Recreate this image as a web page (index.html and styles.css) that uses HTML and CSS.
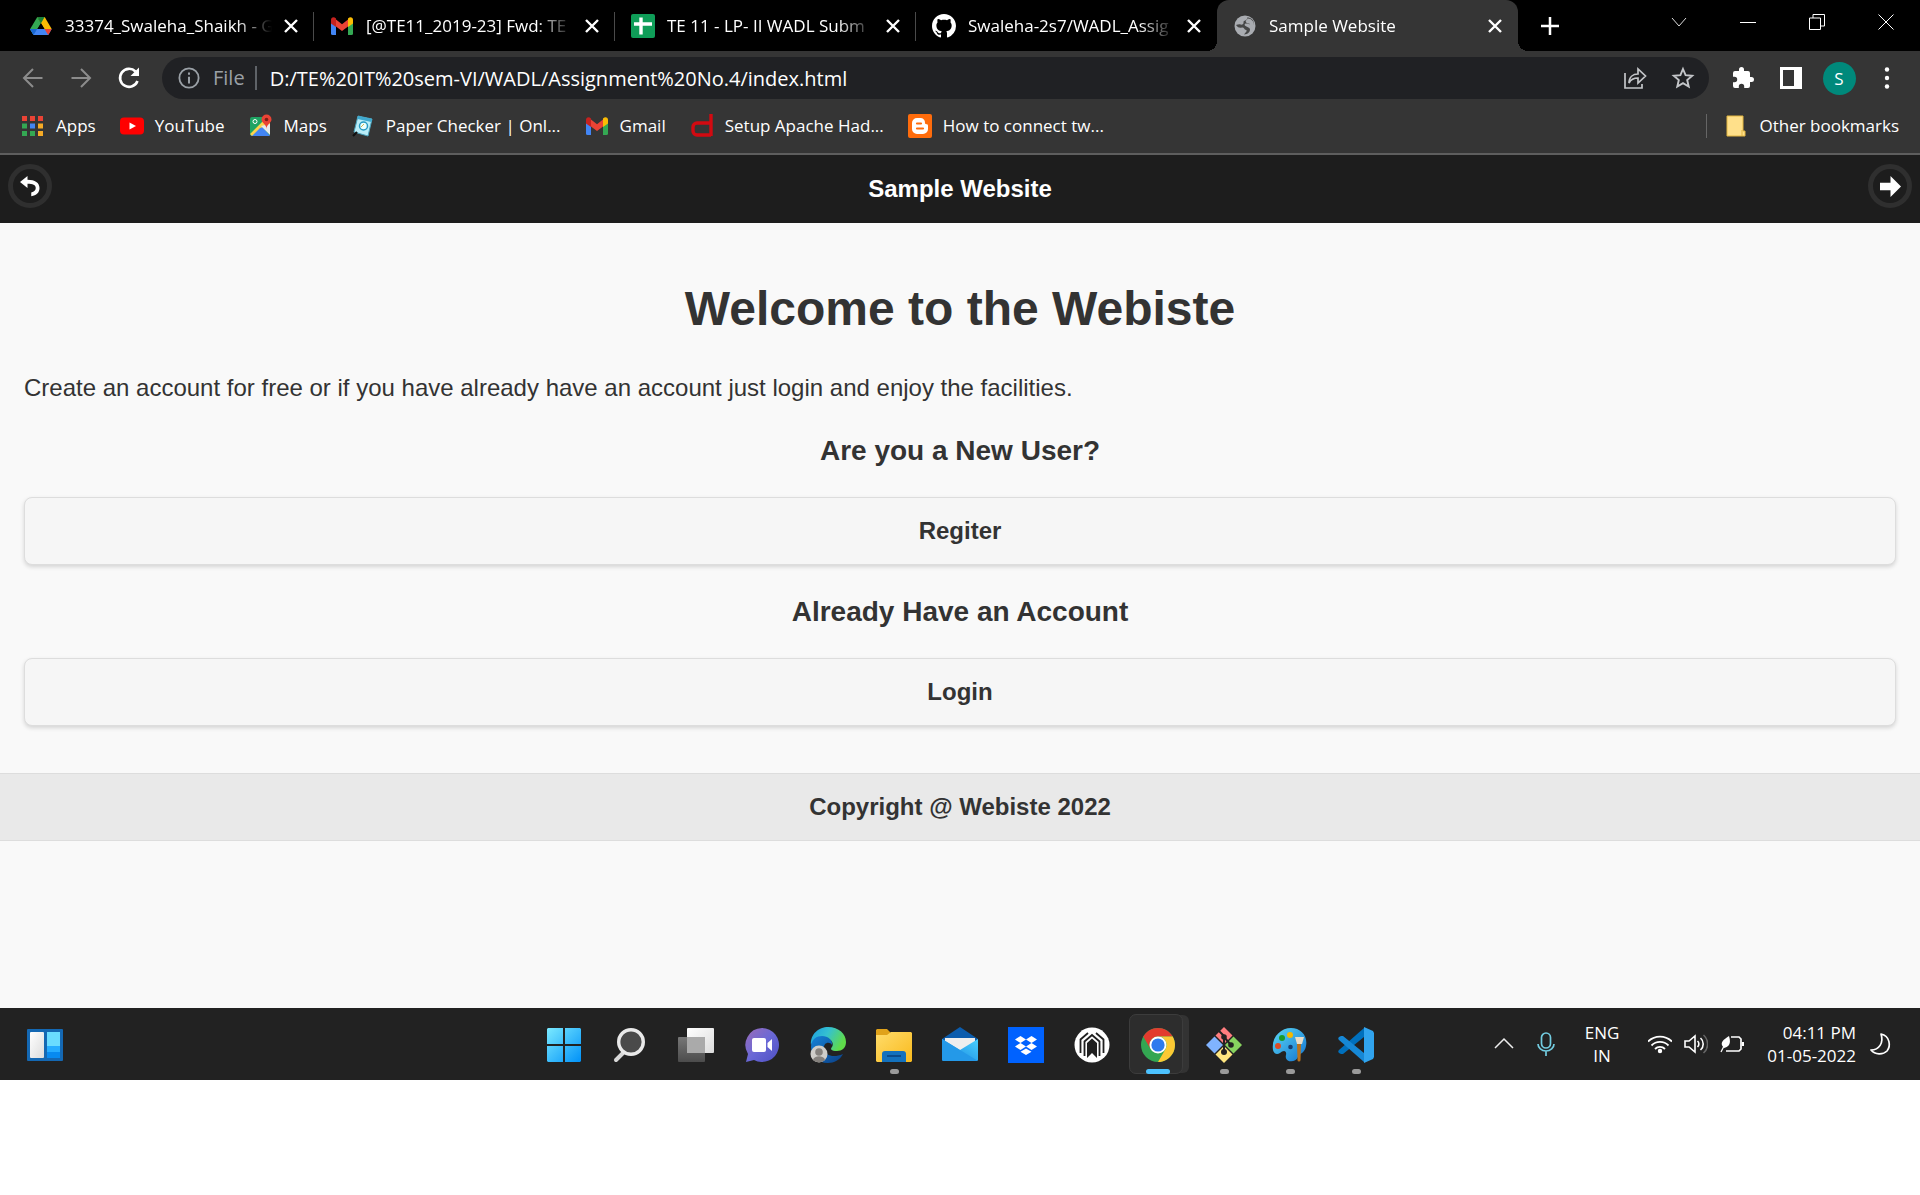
FILE: index.html
```html
<!DOCTYPE html>
<html lang="en">
<head>
<meta charset="utf-8">
<meta name="viewport" content="width=device-width, initial-scale=1">
<title>Sample Website</title>
<link rel="stylesheet" href="styles.css">
</head>
<body>
<svg class="defs" aria-hidden="true">
  <defs>
    <symbol id="close" viewBox="0 0 14 14"><path d="M1 1l12 12M13 1L1 13" stroke="#fff" stroke-width="2.400" fill="none"/></symbol>
    <symbol id="gmail" viewBox="0 0 24 24">
      <path d="M1 6v13.500a1.500 1.500 0 0 0 1.500 1.500H6V9.500z" fill="#4285f4"/>
      <path d="M23 6v13.500a1.500 1.500 0 0 1-1.500 1.500H18V9.500z" fill="#34a853"/>
      <path d="M6 5.500l6 4.800 6-4.800v7L12 17l-6-4.500z" fill="#ea4335"/>
      <path d="M1 6c0-3 3-3.500 5-1.500V13L1 9.500z" fill="#c5221f"/>
      <path d="M23 6c0-3-3-3.500-5-1.500V13l5-3.500z" fill="#fbbc04"/>
    </symbol>
    <linearGradient id="winBlue" x1="0" y1="0" x2="1" y2="1"><stop offset="0" stop-color="#7beaff"/><stop offset="1" stop-color="#0091f8"/></linearGradient>
    <linearGradient id="white" x1="0" y1="0" x2="1" y2="1"><stop offset="0" stop-color="#fff"/><stop offset="1" stop-color="#dcdcdc"/></linearGradient>
    <linearGradient id="grey" x1="0" y1="0" x2="0" y2="1"><stop offset="0" stop-color="#777"/><stop offset="1" stop-color="#4c4c4c"/></linearGradient>
    <linearGradient id="chat" x1="0" y1="0" x2="1" y2="1"><stop offset="0" stop-color="#9b6cb8"/><stop offset=".5" stop-color="#6a68d6"/><stop offset="1" stop-color="#4d4fc4"/></linearGradient>
    <linearGradient id="edgeTop" x1="0" y1="0" x2="1" y2=".4"><stop offset="0" stop-color="#1b9de2"/><stop offset=".5" stop-color="#35c1d0"/><stop offset="1" stop-color="#5fdc4a"/></linearGradient>
    <linearGradient id="edgeLow" x1="0" y1="0" x2="1" y2="1"><stop offset="0" stop-color="#1583d8"/><stop offset="1" stop-color="#0b3f86"/></linearGradient>
    <linearGradient id="folder" x1="0" y1="0" x2="1" y2="1"><stop offset="0" stop-color="#ffdc6b"/><stop offset="1" stop-color="#f9ba1d"/></linearGradient>
    <linearGradient id="mail" x1="0" y1="1" x2="1" y2="0"><stop offset="0" stop-color="#1683dc"/><stop offset="1" stop-color="#4ad0ff"/></linearGradient>
    <linearGradient id="paint" x1="0" y1="0" x2="1" y2="1"><stop offset="0" stop-color="#5bd8f6"/><stop offset="1" stop-color="#1273cf"/></linearGradient>
  </defs>
</svg>

<header class="browser">
  <div class="tabstrip">
    <nav class="tabs" aria-label="Tabs">
      <div class="tab">
        <svg class="icon" viewBox="0 0 24 24"><path d="M8.300 3h7.400l7 12h-7.400z" fill="#fbbc04"/><path d="M8.300 3L1 15.200 4.500 21 12 9.200z" fill="#34a853"/><path d="M8.300 3h7.400L12 9.200z" fill="#188038"/><path d="M1 15h21.700l-3.400 6H4.600z" fill="#4285f4"/><path d="M15.500 15h7.200l-3.500 6z" fill="#ea4335"/><path d="M1 15h7.200l-3.700 6z" fill="#1967d2"/><path d="M12 9.200L15.500 15h-7z" fill="#000"/></svg>
        <button class="tab-title">33374_Swaleha_Shaikh - G</button>
        <button class="tab-close" aria-label="Close tab"><svg viewBox="0 0 14 14"><use href="#close"/></svg></button>
      </div>
      <div class="tab">
        <svg class="icon" viewBox="0 0 24 24"><use href="#gmail"/></svg>
        <button class="tab-title">[@TE11_2019-23] Fwd: TE</button>
        <button class="tab-close" aria-label="Close tab"><svg viewBox="0 0 14 14"><use href="#close"/></svg></button>
      </div>
      <div class="tab">
        <svg class="icon" viewBox="0 0 24 24"><rect width="24" height="24" rx="2" fill="#0f9d58"/><path d="M3 10h18M10 3.500v17" stroke="#fff" stroke-width="3.400"/></svg>
        <button class="tab-title">TE 11 - LP- II WADL Subm</button>
        <button class="tab-close" aria-label="Close tab"><svg viewBox="0 0 14 14"><use href="#close"/></svg></button>
      </div>
      <div class="tab no-line">
        <svg class="icon" viewBox="0 0 16 16"><path fill="#fff" d="M8 0C3.580 0 0 3.580 0 8c0 3.540 2.290 6.530 5.470 7.590.4.070.55-.17.55-.38 0-.19-.01-.82-.01-1.490-2.010.37-2.530-.49-2.690-.94-.09-.23-.48-.94-.82-1.130-.28-.15-.68-.52-.01-.53.63-.01 1.080.58 1.230.82.72 1.210 1.870.87 2.330.66.070-.52.28-.87.51-1.070-1.780-.2-3.640-.89-3.640-3.950 0-.87.31-1.590.82-2.150-.08-.2-.36-1.020.08-2.120 0 0 .67-.21 2.200.82.64-.18 1.320-.27 2-.27s1.360.09 2 .27c1.530-1.040 2.200-.82 2.200-.82.44 1.100.16 1.920.08 2.120.51.56.82 1.270.82 2.150 0 3.070-1.870 3.750-3.650 3.950.29.25.54.73.54 1.480 0 1.070-.01 1.930-.01 2.200 0 .21.15.46.55.38A8.010 8.010 0 0 0 16 8c0-4.420-3.580-8-8-8z"/></svg>
        <button class="tab-title">Swaleha-2s7/WADL_Assig</button>
        <button class="tab-close" aria-label="Close tab"><svg viewBox="0 0 14 14"><use href="#close"/></svg></button>
      </div>
      <div class="tab active">
        <svg class="icon" viewBox="0 0 24 24"><circle cx="12" cy="12" r="10.500" fill="#a9acb1"/><path d="M14 3.500c1 1 0 2-1 2.500s-3 1-2.500 2.500S9 11 7.500 10.500s-3 .5-4.500.5c2 3 4 3 6 2.500s2 2 4 2.500-1 3-2 4.500c4 0 6-3 6-5s-3-2.500-4.500-3.500-1-2.500.5-2.500 3 1 4.500.5 2.500 0 3.500.5C21 6 18 3.500 14 3.500z" fill="#353535" opacity=".85"/><path d="M15 4.500c3 0 6 3 6 6-2 1-4-1-5.500-1S12 8 13 6.500z" fill="#a9acb1"/></svg>
        <button class="tab-title">Sample Website</button>
        <button class="tab-close" aria-label="Close tab"><svg viewBox="0 0 14 14"><use href="#close"/></svg></button>
      </div>
      <button class="new-tab" aria-label="New tab"><svg viewBox="0 0 18 18"><path d="M9 0v18M0 9h18" stroke="#fff" stroke-width="2.500"/></svg></button>
    </nav>
    <div class="window-controls">
      <button aria-label="Search tabs"><svg viewBox="0 0 16 16"><path d="M1 4l7 8 7-8" stroke="#ddd" fill="none"/></svg></button>
      <button aria-label="Minimize"><svg viewBox="0 0 16 16"><path d="M0 8.500h16" stroke="#fff"/></svg></button>
      <button aria-label="Restore"><svg viewBox="0 0 16 16"><path d="M.5 4h11v11.500H.5zM4 4V.5h11.500V12H12" stroke="#fff" fill="none"/></svg></button>
      <button aria-label="Close"><svg viewBox="0 0 16 16"><path d="M.5.5l15 15M15.500.5l-15 15" stroke="#fff"/></svg></button>
    </div>
  </div>

  <div class="toolbar">
    <button class="tool" aria-label="Back"><svg viewBox="0 0 24 24"><path d="M21.500 12H3M12 3l-9 9 9 9" stroke="#8c8c8c" stroke-width="2" fill="none"/></svg></button>
    <button class="tool" aria-label="Forward"><svg viewBox="0 0 24 24"><path d="M2.500 12H21M12 3l9 9-9 9" stroke="#8c8c8c" stroke-width="2" fill="none"/></svg></button>
    <button class="tool" aria-label="Reload"><svg viewBox="0 0 24 24"><path d="M20.500 15a9 9 0 1 1-2-9.500" stroke="#fff" stroke-width="2.600" fill="none"/><path d="M22 1.500V10h-8.500z" fill="#fff"/></svg></button>
    <div class="address">
      <svg class="info" viewBox="0 0 24 24"><circle cx="12" cy="12" r="10.500" stroke="#9aa0a6" stroke-width="2" fill="none"/><path d="M12 10.500V18M12 6v2.500" stroke="#9aa0a6" stroke-width="2.200"/></svg>
      <label for="url">File</label>
      <input id="url" type="text" value="D:/TE%20IT%20sem-VI/WADL/Assignment%20No.4/index.html">
      <button class="tool" aria-label="Share"><svg viewBox="0 0 24 24"><path d="M2 7v15h17v-4M6 17c0-6 4-9 9-9V3l7.500 7-7.500 7v-5c-4 0-7 1-9 5z" stroke="#c4c6c9" stroke-width="1.700" fill="none"/></svg></button>
      <button class="tool" aria-label="Bookmark"><svg viewBox="0 0 24 24"><path d="M12 3l2.600 6.100 6.600.6-5 4.300 1.500 6.500-5.700-3.400-5.700 3.400L7.800 14l-5-4.300 6.600-.6z" stroke="#c4c6c9" stroke-width="1.900" fill="none"/></svg></button>
    </div>
    <div class="actions">
      <button class="tool" aria-label="Extensions"><svg viewBox="0 0 24 24"><path fill="#fff" d="M20.500 11H19V7a2 2 0 0 0-2-2h-4V3.500a2.500 2.500 0 0 0-5 0V5H4a2 2 0 0 0-2 2v3.800h1.500a2.700 2.700 0 0 1 0 5.400H2V20a2 2 0 0 0 2 2h3.800v-1.500a2.700 2.700 0 0 1 5.400 0V22H17a2 2 0 0 0 2-2v-4h1.500a2.500 2.500 0 0 0 0-5z"/></svg></button>
      <button class="tool" aria-label="Side panel"><svg viewBox="0 0 24 24"><path fill="#fff" fill-rule="evenodd" d="M1 1h22v22H1zM4 4v16h11V4z"/></svg></button>
      <button class="tool" aria-label="Profile"><span class="avatar">S</span></button>
      <button class="tool" aria-label="Menu"><svg viewBox="0 0 24 24" fill="#fff"><circle cx="12" cy="3.500" r="2.200"/><circle cx="12" cy="12" r="2.200"/><circle cx="12" cy="20.500" r="2.200"/></svg></button>
    </div>
  </div>

  <nav class="bookmarks" aria-label="Bookmarks">
    <a href="#"><svg class="icon" viewBox="0 0 24 24"><path fill="#ea4335" d="M1 2h5v5H1zM9 2h5v5H9zM17 2h5v5h-5z"/><path fill="#34a853" d="M1 9.500h5v5H1zM1 17h5v5H1zM9 17h5v5H9z"/><path fill="#4285f4" d="M9 9.500h5v5H9z"/><path fill="#f5ab26" d="M17 9.500h5v5h-5zM17 17h5v5h-5z"/></svg>Apps</a>
    <a href="#"><svg class="icon" viewBox="0 0 24 24"><rect y="3.500" width="24" height="17" rx="4" fill="#f00"/><path d="M9.500 8.500v7l6.500-3.500z" fill="#fff"/></svg>YouTube</a>
    <a href="#"><svg class="icon" viewBox="0 0 24 24"><rect x="1" y="3" width="20" height="19" rx="2" fill="#1fa463"/><path d="M2 22L12 11l9 11z" fill="#4285f4"/><path d="M1 20L16 5l5 3v3L11 14l-8 8z" fill="#fbd44b"/><path d="M12 12l9 9V10z" fill="#e8eaed"/><circle cx="6" cy="7.500" r="2" stroke="#fff" fill="none"/><path d="M17.500 15c0-5-5-6-5-9.500a5 5 0 0 1 10 0c0 3.500-5 4.500-5 9.500z" fill="#ea4335"/><circle cx="17.500" cy="5.500" r="1.800" fill="#7b1e16"/></svg>Maps</a>
    <a href="#"><svg class="icon" viewBox="0 0 24 24"><path d="M7 2l14 3-4 17-14-4z" fill="#b9edf8" stroke="#4aa3bd"/><path d="M7 2l14 3-.7 3L6.500 5z" fill="#3fa9cf"/><circle cx="12.500" cy="12" r="4" fill="#eaffff" stroke="#269ac2" stroke-width="1.500"/><path d="M6 18l-4 4" stroke="#111" stroke-width="2.200"/><path d="M10 13l3-3" stroke="#d2b54b"/></svg>Paper Checker | Onl...</a>
    <a href="#"><svg class="icon" viewBox="0 0 24 24"><use href="#gmail"/></svg>Gmail</a>
    <a href="#"><svg class="icon" viewBox="0 0 24 24"><path d="M21 0v22M21 9H7a4 4 0 0 0-4 4v4a4 4 0 0 0 4 4h14" stroke="#d20a11" stroke-width="3.400" fill="none"/></svg>Setup Apache Had...</a>
    <a href="#"><svg class="icon" viewBox="0 0 24 24"><rect width="24" height="24" rx="2" fill="#ff6c0c"/><path d="M9 4h4a5 5 0 0 1 4 5c0 2 3 0 3 3v3a5 5 0 0 1-5 5H9a5 5 0 0 1-5-5V9a5 5 0 0 1 5-5z" fill="#fff"/><path d="M9 9.500h4M9 14.500h6" stroke="#ff6c0c" stroke-width="2.200" stroke-linecap="round"/></svg>How to connect tw...</a>
    <a class="other" href="#"><svg class="icon" viewBox="0 0 24 24"><path d="M3 2h16v15h2v5H3z" fill="#ffe08a" stroke="#e3b640"/><path d="M18 16v6" stroke="#e3b640"/></svg>Other bookmarks</a>
  </nav>
</header>

<div class="page">
  <div class="page-header">
    <a class="round" href="#" aria-label="Back"><svg viewBox="0 0 14 14"><path d="M5 0v2.500c5 0 8 2 8 5.500 0 3-2 5-5.500 5.500v-2.500c2-.5 3-1.500 3-3 0-2-2-2.800-5.500-2.800V8L0 4z" fill="#fff"/></svg></a>
    <h1>Sample Website</h1>
    <a class="round" href="#" aria-label="Next"><svg viewBox="0 0 14 14"><path d="M7 0l7 7-7 7V9.500H0v-5h7z" fill="#fff"/></svg></a>
  </div>
  <main class="content">
    <h2 class="welcome">Welcome to the Webiste</h2>
    <p>Create an account for free or if you have already have an account just login and enjoy the facilities.</p>
    <h3>Are you a New User?</h3>
    <a class="btn" href="#">Regiter</a>
    <h3>Already Have an Account</h3>
    <a class="btn" href="#">Login</a>
  </main>
  <footer class="page-footer"><h4>Copyright @ Webiste 2022</h4></footer>
</div>

<div class="taskbar">
  <div class="left">
    <button class="app" aria-label="Widgets"><svg viewBox="0 0 36 36"><rect y="2" width="36" height="32" rx="1" fill="#1468b3"/><rect x="3" y="5" width="14" height="26" rx="1" fill="url(#white)"/><path d="M20 5h13v14H20z" fill="#6adcff"/><path d="M20 19h13v6H20z" fill="#25acff"/><path d="M20 25h13v6H20z" fill="#078af0"/></svg></button>
  </div>
  <div class="apps">
    <button class="app" aria-label="Start"><svg viewBox="0 0 36 36"><path d="M2 1h15v16H1V2zM19 1h15l1 1v15H19zM1 19h16v16H2l-1-1zM19 19h16v15l-1 1H19z" fill="url(#winBlue)"/></svg></button>
    <button class="app" aria-label="Search"><svg viewBox="0 0 36 36"><path d="M11 26l-7 7" stroke="#d8d8d8" stroke-width="4" stroke-linecap="round"/><circle cx="19" cy="15" r="12.300" fill="#4a4a4a" stroke="#e9e9e9" stroke-width="3.400"/></svg></button>
    <button class="app" aria-label="Task view"><svg viewBox="0 0 36 36"><rect y="10" width="27" height="25" rx="1" fill="url(#grey)"/><rect x="9" y="1" width="27" height="25" rx="1" fill="url(#white)"/><path d="M9 10h18v16H9z" fill="#aaa"/></svg></button>
    <button class="app" aria-label="Chat"><svg viewBox="0 0 36 36"><path d="M18 1a17 17 0 1 1-8 32l-8 2 2-8A17 17 0 0 1 18 1z" fill="url(#chat)"/><rect x="8" y="11" width="14" height="14" rx="2" fill="#fff"/><path d="M23.500 16l4.500-4v12l-4.500-4z" fill="#fff"/></svg></button>
    <button class="app" aria-label="Edge"><svg viewBox="0 0 36 36"><path d="M1 18C0 7 9 0 18 0c11 0 18 7 18 15 0 6-4 9-9 9-6 0-7-2-5-4 2-3 0-8-6-9C9 10 3 13 1 18z" fill="url(#edgeTop)"/><path d="M1 20C1 12 7 9 12 9c6 0 11 4 10 9-2-4-9-3-8 4 1 7 10 9 19 5-3 6-9 9-15 9C8 36 1 29 1 20z" fill="url(#edgeLow)"/><circle cx="9" cy="27" r="8.500" fill="#cfcdc9"/><circle cx="9" cy="25" r="3.800" fill="#85817d"/><path d="M3 33c1-5 11-5 12 0-3 3-9 3-12 0z" fill="#85817d"/></svg></button>
    <button class="app running" aria-label="File Explorer"><svg viewBox="0 0 36 36"><path d="M0 3l1-1h10l4 4-3 5H0z" fill="#e0a21a"/><path d="M0 8h11l4-3h20l1 1v28l-1 1H1l-1-1z" fill="url(#folder)"/><path d="M6 35v-8a3 3 0 0 1 3-3h18a3 3 0 0 1 3 3v8z" fill="#1371bd"/><path d="M11 29h14" stroke="#0b4885" stroke-width="1.800"/></svg></button>
    <button class="app" aria-label="Mail"><svg viewBox="0 0 36 36"><path d="M0 12L18 0l18 12v6H0z" fill="#0b5cad"/><path d="M3 11h30v10l-15 8-15-8z" fill="#eee"/><path d="M0 12l18 11L36 12v21l-1 1H1l-1-1z" fill="url(#mail)"/><path d="M0 12l36 22H1l-1-1z" fill="#2499e8"/></svg></button>
    <button class="app" aria-label="Dropbox"><svg viewBox="0 0 36 36"><path d="M0 0h36v36H0z" fill="#0062ff"/><path d="M12.500 9l5.500 3.500-5.500 3.500L7 12.500zM23.500 9l5.500 3.500-5.500 3.500-5.500-3.500zM12.500 16l5.500 3.500-5.500 3.500L7 19.500zM23.500 16l5.500 3.500-5.500 3.500-5.500-3.500zM18 21.500l5.500 3.200L18 28l-5.500-3.300z" fill="#fff"/></svg></button>
    <button class="app" aria-label="Notes"><svg viewBox="0 0 36 36"><circle cx="18" cy="18" r="17.500" fill="#fff"/><path d="M10.500 29V14.500L18 8l7.500 6.500V29" stroke="#202020" stroke-width="1.800" fill="none"/><path d="M13 31V16l5-4.500 5 4.500v15l-5-5z" fill="#202020"/><path d="M6.500 26V12.500L14 6M29.500 26V12.500L22 6" stroke="#202020" stroke-width="1.800" fill="none"/></svg></button>
    <button class="app running active" aria-label="Chrome"><svg viewBox="0 0 36 36"><circle cx="18" cy="18" r="17" fill="#33a652"/><path d="M3.300 9.500A17 17 0 0 1 32.700 9.500H18a8.500 8.500 0 0 0-7.400 12.700z" fill="#e33b2e"/><path d="M32.700 9.500A17 17 0 0 1 18 35l7.400-12.700A8.500 8.500 0 0 0 18 9.500z" fill="#fcc934"/><circle cx="18" cy="18" r="8.500" fill="#fff"/><circle cx="18" cy="18" r="6.600" fill="#2e7bee"/></svg></button>
    <button class="app running" aria-label="Git"><svg viewBox="0 0 36 36"><path d="M18 0l8.500 8.500L18 17 9.500 8.500z" fill="#ff7d7f"/><path d="M8.500 9.500L17 18l-8.500 8.500L0 18z" fill="#80b3ff"/><path d="M27.500 9.500L36 18l-8.500 8.500L19 18z" fill="#87d35f"/><path d="M18 19l8.500 8.500L18 36l-8.500-8.500z" fill="#ffe680"/><path d="M13 4l5 5v16M18 10l7 8" stroke="#222" stroke-width="2" fill="none"/><g fill="#222"><circle cx="18" cy="10" r="2.800"/><circle cx="25" cy="18" r="2.800"/><circle cx="18" cy="25" r="3"/></g></svg></button>
    <button class="app running" aria-label="Paint"><svg viewBox="0 0 36 36"><path d="M1 23C-1 10 9 1 19 1c10 0 17 8 15 18-1 7-6 7-8 11-3 7-14 5-12-2 1-5-3-5-6-2-3 2-6 1-7-3z" fill="url(#paint)"/><circle cx="10" cy="11" r="3" fill="#199b2c"/><circle cx="18" cy="8" r="3" fill="#f5b900"/><circle cx="6" cy="19" r="3" fill="#dc4c25"/><circle cx="18.500" cy="20" r="2.300" fill="#173f72"/><path d="M25 17h4l-.5 16a1.500 1.500 0 0 1-3 0z" fill="#b8721d"/><path d="M23 10h9l-2 7h-5z" fill="#e8ddc9"/></svg></button>
    <button class="app running" aria-label="Visual Studio Code"><svg viewBox="0 0 36 36"><path d="M26 1L1 23c-1 1-1 2 0 3l2 1h2l21-17z" fill="#0070bd"/><path d="M26 35L1 13c-1-1-1-2 0-3l2-1h2l21 17z" fill="#1688d6"/><path d="M26 0l9 4 1 2v24l-1 2-9 4z" fill="#31a4ee"/></svg></button>
  </div>
  <div class="tray">
    <button class="mini" aria-label="Hidden icons"><svg viewBox="0 0 24 24"><path d="M3 16l9-9 9 9" stroke="#eee" stroke-width="1.500" fill="none"/></svg></button>
    <button class="mini mic" aria-label="Microphone"><svg viewBox="0 0 24 24" fill="none" stroke="#72cce0" stroke-width="1.700"><rect x="7.500" y="1" width="9" height="15" rx="4.500"/><path d="M4 12a8 7 0 0 0 16 0M12 19v5"/></svg></button>
    <button class="lang">ENG<br>IN</button>
    <div class="status">
      <button class="mini" aria-label="Wi-Fi"><svg viewBox="0 0 24 24" fill="none" stroke="#fff" stroke-width="1.800"><path d="M0 9.500a17 17 0 0 1 24 0M3.500 13.500a12 12 0 0 1 17 0M7 17a7 7 0 0 1 10 0"/><circle cx="12" cy="19" r="1.300" fill="#fff"/></svg></button>
      <button class="mini" aria-label="Volume"><svg viewBox="0 0 24 24" fill="none" stroke="#fff" stroke-width="1.600"><path d="M1 9h4l6-5v16l-6-5H1zM13.500 9a4 4 0 0 1 0 6M16.500 6a8 8 0 0 1 0 12"/><path d="M19.500 3a12 12 0 0 1 0 18" stroke="#666"/></svg></button>
      <button class="mini" aria-label="Battery"><svg viewBox="0 0 24 24" fill="none" stroke="#fff" stroke-width="1.700"><path d="M11 5h8l2 2v10l-2 2H6"/><path d="M23 10v4" stroke-width="2.500"/><path d="M9 4c2 6 1 11-5 12-5-5-1-8 5-12z" fill="#fff" stroke="none"/><path d="M5 12l-4 8" stroke-width="1.300"/></svg></button>
    </div>
    <button class="clock"><time>04:11 PM<br>01-05-2022</time></button>
    <button class="mini" aria-label="Focus assist"><svg viewBox="0 0 24 24"><path d="M13 2c9 2 10 12 6 17-4 4-12 4-16-1 8 0 13-7 10-16z" stroke="#fff" stroke-width="1.700" fill="none" stroke-linejoin="round"/></svg></button>
  </div>
</div>
</body>
</html>
```
FILE: styles.css
```css
* {
  box-sizing: border-box;
}

body {
  margin: 0;
  min-height: 100vh;
  padding-bottom: 115px;
  display: flex;
  flex-direction: column;
  background: #fff;
  font-family: "Open Sans", "Noto Sans", sans-serif;
  font-size: 17px;
  color: #fff;
}

button,
input {
  font: inherit;
  color: inherit;
  background: none;
  border: 0;
  padding: 0;
}

a {
  color: inherit;
  text-decoration: none;
}

svg {
  display: block;
  flex: none;
}

.defs {
  position: absolute;
  width: 0;
  height: 0;
}

.icon {
  width: 24px;
  height: 24px;
}

/* Browser window */

.browser {
  background: #353535;
  border-bottom: 2px solid #5e5e5e;
}

.tabstrip {
  height: 51px;
  display: flex;
  justify-content: space-between;
  background: #000;
}

.tabs {
  flex: 1;
  min-width: 0;
  display: flex;
  padding-left: 13px;
}

.tab {
  position: relative;
  flex: 0 1 301px;
  min-width: 0;
  display: flex;
  align-items: center;
  gap: 12px;
  padding: 0 16px;
}

.tab:not(.no-line):not(.active)::after {
  content: "";
  position: absolute;
  right: 0;
  top: 12px;
  height: 29px;
  width: 1px;
  background: #4a4a4a;
}

.tab-title {
  flex: 1;
  min-width: 0;
  overflow: hidden;
  white-space: nowrap;
  text-align: left;
  mask-image: linear-gradient(to right, #000 calc(100% - 36px), transparent);
}

.tab-close svg {
  width: 14px;
  height: 14px;
}

.tab.active {
  background: #353535;
  border-radius: 12px 12px 0 0;
}

.tab.active::before,
.tab.active::after {
  content: "";
  position: absolute;
  bottom: 0;
  width: 10px;
  height: 10px;
}

.tab.active::before {
  right: 100%;
  background: radial-gradient(circle at 0 0, #000 10px, #353535 10px);
}

.tab.active::after {
  left: 100%;
  background: radial-gradient(circle at 100% 0, #000 10px, #353535 10px);
}

.new-tab {
  margin-left: 23px;
}

.new-tab svg {
  width: 18px;
  height: 18px;
}

.window-controls {
  display: flex;
  height: 43px;
}

.window-controls button {
  width: 69px;
  display: grid;
  place-items: center;
}

.window-controls svg {
  width: 16px;
  height: 16px;
}

.toolbar {
  height: 54px;
  display: flex;
  align-items: center;
  padding: 0 9px;
}

.tool {
  width: 48px;
  height: 42px;
  display: grid;
  place-items: center;
}

.tool svg {
  width: 24px;
  height: 24px;
}

.address {
  flex: 1;
  height: 42px;
  margin: 0 10px 0 9px;
  padding: 0 2px 0 16px;
  display: flex;
  align-items: center;
  border-radius: 21px;
  background: #202124;
  font-size: 20px;
}

.info {
  width: 22px;
  height: 22px;
}

.address label {
  margin-left: 13px;
  padding-right: 10px;
  line-height: 24px;
  border-right: 2px solid #5f6368;
  color: #9aa0a6;
}

.address input {
  flex: 1;
  min-width: 0;
  padding-left: 13px;
}

.actions {
  display: flex;
}

.avatar {
  width: 33px;
  height: 33px;
  display: grid;
  place-items: center;
  border-radius: 50%;
  background: #00897b;
}

.bookmarks {
  height: 48px;
  display: flex;
  align-items: center;
  gap: 24px;
  padding: 0 21px 7px;
  white-space: nowrap;
}

.bookmarks a {
  display: flex;
  align-items: center;
  gap: 11px;
}

.bookmarks .other {
  margin-left: auto;
  padding-left: 17px;
  border-left: 1px solid #666;
}

/* Web page */

.page {
  flex: 1;
  background: #f9f9f9;
  color: #333;
  font-family: "Liberation Sans", Arial, sans-serif;
  font-size: 24px;
  line-height: 31px;
}

.page-header {
  height: 68px;
  display: flex;
  align-items: center;
  justify-content: space-between;
  padding: 0 8px 2px;
  background: #1d1d1d;
  color: #fff;
}

.page-header h1,
.page-footer h4 {
  margin: 0;
  font-size: 24px;
}

.round {
  width: 44px;
  height: 44px;
  margin-bottom: 4px;
  display: grid;
  place-items: center;
  border: 5px solid #2f2f2f;
  border-radius: 50%;
}

.round svg {
  width: 21px;
  height: 21px;
}

.content {
  padding: 24px 24px 23px;
  display: flow-root;
}

.welcome {
  margin: 31px 0 32px;
  font-size: 48px;
  line-height: 62px;
  text-align: center;
}

.content p {
  margin: 0;
  line-height: 32px;
}

.content h3 {
  margin: 28px 0;
  font-size: 28px;
  line-height: 37px;
  text-align: center;
}

.btn {
  display: block;
  margin-bottom: 24px;
  padding: 18px;
  border: 1px solid #ddd;
  border-radius: 8px;
  background: #f6f6f6;
  box-shadow: 0 2px 4px rgba(0, 0, 0, 0.15);
  font-weight: bold;
  line-height: 30px;
  text-align: center;
}

.page-footer {
  padding: 18px;
  border: solid #ddd;
  border-width: 1px 0;
  background: #e9e9e9;
  line-height: 30px;
  text-align: center;
}

/* Desktop taskbar */

.taskbar {
  height: 72px;
  display: grid;
  grid-template-columns: 1fr auto 1fr;
  align-items: center;
  background: #222;
}

.left {
  padding-left: 12px;
}

.apps {
  display: flex;
}

.app {
  position: relative;
  width: 66px;
  height: 60px;
  padding-top: 2px;
  display: grid;
  place-items: center;
}

.app svg {
  position: relative;
  width: 36px;
  height: 36px;
}

.app.running::after {
  content: "";
  position: absolute;
  left: 50%;
  bottom: 0;
  width: 9px;
  height: 5px;
  margin-left: -4px;
  border-radius: 3px;
  background: #9a9a9a;
}

.app.active::before {
  content: "";
  position: absolute;
  inset: 0 8px 0 4px;
  border-radius: 7px;
  border: 1px solid #3c3c3c;
  background: #2d2d2d;
  box-shadow: 7px 0 0 -1px #333;
}

.app.active::after {
  width: 24px;
  margin-left: -12px;
  background: #4cc2ff;
}

.tray {
  display: flex;
  align-items: center;
  justify-content: flex-end;
  padding-right: 28px;
  line-height: 23px;
}

.mini svg {
  width: 24px;
  height: 24px;
}

.mic {
  margin: 0 27px 0 18px;
}

.status {
  display: flex;
  gap: 12px;
  margin: 0 23px 0 29px;
}

.clock {
  margin-right: 12px;
  text-align: right;
}
```
